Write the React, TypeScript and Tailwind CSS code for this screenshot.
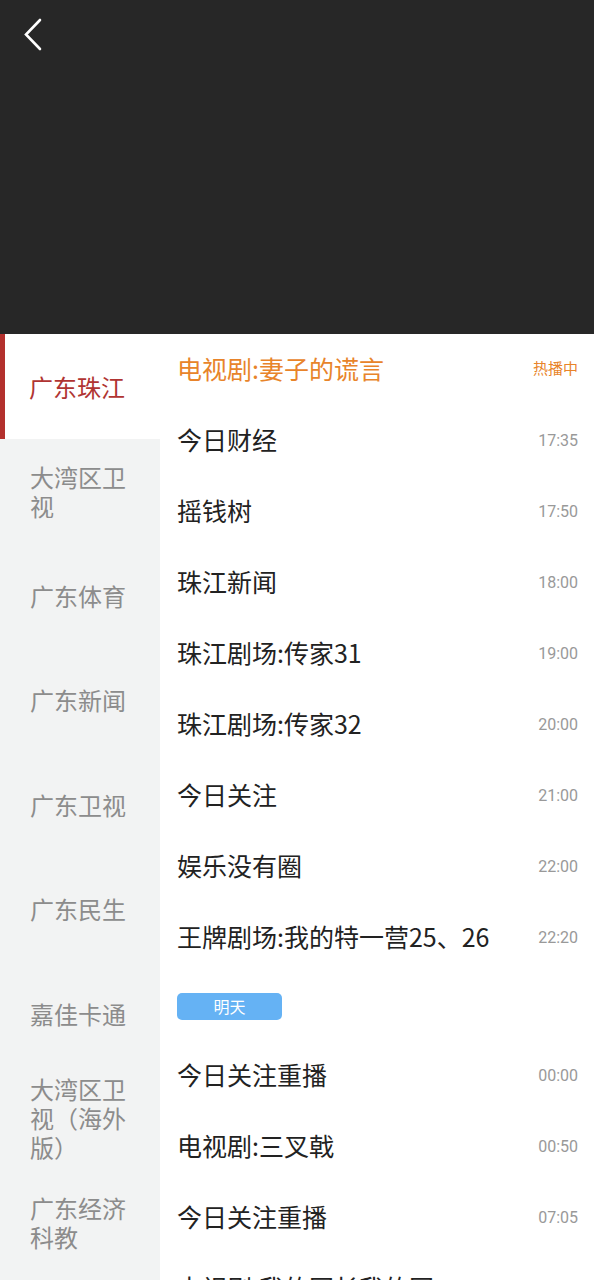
import React from "react";

const channels = [
  "广东珠江",
  "大湾区卫视",
  "广东体育",
  "广东新闻",
  "广东卫视",
  "广东民生",
  "嘉佳卡通",
  "大湾区卫视（海外版）",
  "广东经济科教",
];

type Row = { t: string; time?: string; hot?: boolean; badge?: boolean };

const rows: Row[] = [
  { t: "电视剧:妻子的谎言", hot: true },
  { t: "今日财经", time: "17:35" },
  { t: "摇钱树", time: "17:50" },
  { t: "珠江新闻", time: "18:00" },
  { t: "珠江剧场:传家31", time: "19:00" },
  { t: "珠江剧场:传家32", time: "20:00" },
  { t: "今日关注", time: "21:00" },
  { t: "娱乐没有圈", time: "22:00" },
  { t: "王牌剧场:我的特一营25、26", time: "22:20" },
  { t: "明天", badge: true },
  { t: "今日关注重播", time: "00:00" },
  { t: "电视剧:三叉戟", time: "00:50" },
  { t: "今日关注重播", time: "07:05" },
  { t: "电视剧:我的团长我的团", time: "08:00" },
];

export default function App() {
  const font = { fontFamily: '"Noto Sans CJK SC", "Noto Sans", sans-serif' };
  return (
    <div className="w-[594px] h-[1280px] overflow-hidden bg-white" style={font}>
      <div className="h-[334px] bg-[#272727] relative">
        <svg className="absolute left-[22px] top-[18px]" width="22" height="34" viewBox="0 0 22 34">
          <path d="M18 2 L4 16.5 L18 31" fill="none" stroke="#ffffff" strokeWidth="2.6" strokeLinecap="round" strokeLinejoin="miter" />
        </svg>
      </div>
      <div className="flex">
        <div className="w-[160px] shrink-0 bg-[#f2f3f3]">
          {channels.map((c, i) => (
            <div
              key={i}
              className={
                "h-[104.5px] flex items-center text-[24px] leading-[29px] " +
                (i === 0
                  ? "bg-white text-[#b03432] border-l-[5px] border-[#b3302d] pl-[24px]"
                  : "text-[#8c8c8c] pl-[30px]")
              }
            >
              <span className="block w-[100px]">{c}</span>
            </div>
          ))}
        </div>
        <div className="flex-1 min-w-0 pl-[17px] pr-[16px]">
          {rows.map((r, i) =>
            r.badge ? (
              <div key={i} className="h-[67px] flex items-center">
                <div className="w-[105px] h-[27px] rounded-[5px] bg-[#65b2f4] text-white text-[16px] leading-[27px] text-center">
                  {r.t}
                </div>
              </div>
            ) : (
              <div key={i} className="h-[71px] flex items-center justify-between">
                <span
                  className={
                    "text-[25px] leading-[30px] whitespace-nowrap -mt-[3px] " +
                    (r.hot ? "text-[#e8842a]" : "text-[#222222]")
                  }
                >
                  {r.t}
                </span>
                {r.hot ? (
                  <span className="text-[15px] text-[#e8842a] whitespace-nowrap -mt-[2px]">热播中</span>
                ) : (
                  <span
                    className="text-[16px] text-[#999999]"
                    style={{ fontFamily: 'Roboto, "Noto Sans", sans-serif' }}
                  >
                    {r.time}
                  </span>
                )}
              </div>
            )
          )}
        </div>
      </div>
    </div>
  );
}
